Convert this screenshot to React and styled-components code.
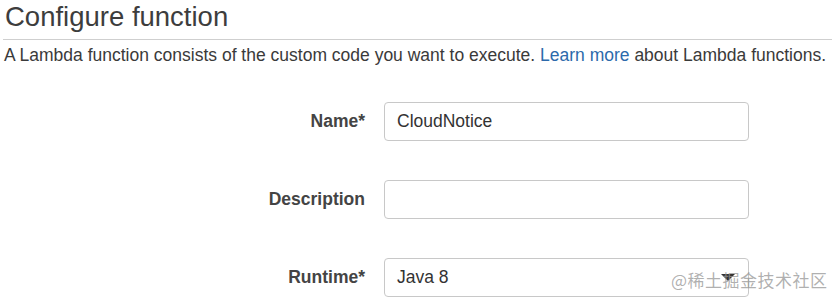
import React from 'react'
import styled, { createGlobalStyle } from 'styled-components'

const GlobalStyle = createGlobalStyle`
  body {
    margin: 0;
    background: #fff;
    font-family: 'Liberation Sans', Arial, sans-serif;
  }
`

const Page = styled.div`
  position: relative;
  width: 832px;
  height: 305px;
  overflow: hidden;
`

const Title = styled.h1`
  margin: 0 0 0 3px;
  padding: 0 0 0 2px;
  height: 40px;
  box-sizing: border-box;
  font-size: 27.5px;
  font-weight: 400;
  line-height: 34px;
  color: #3d3d3d;
  border-bottom: 1px solid #cfcfcf;
`

const Intro = styled.p`
  margin: 0;
  padding: 4px 0 0 4px;
  font-size: 17.5px;
  line-height: 22px;
  color: #3a3a3a;
  white-space: nowrap;
`

const Link = styled.a`
  color: #2c6aab;
  text-decoration: none;
`

const Form = styled.div`
  display: flex;
  flex-direction: column;
  gap: 39px;
  padding-top: 36px;
`

const Row = styled.div`
  display: grid;
  grid-template-columns: 365px 365px;
  column-gap: 19px;
  align-items: center;
`

const Label = styled.label`
  text-align: right;
  font-size: 17.5px;
  font-weight: 700;
  color: #444;
`

const Field = styled.div`
  position: relative;
  height: 39px;
  box-sizing: border-box;
  border: 1px solid #c8c8c8;
  border-radius: 4px;
  padding: 0 12px;
  display: flex;
  align-items: center;
  font-size: 17.5px;
  color: #333;
`

const Caret = styled.span`
  position: absolute;
  right: 13px;
  top: 15px;
  width: 0;
  height: 0;
  border-left: 7px solid transparent;
  border-right: 7px solid transparent;
  border-top: 7px solid #333;
`

const Watermark = styled.div`
  position: absolute;
  left: 671px;
  top: 267px;
  font-family: 'Noto Sans CJK SC', sans-serif;
  font-size: 17px;
  letter-spacing: 0.5px;
  color: rgba(150, 150, 150, 0.75);
  white-space: nowrap;
`

export default function App() {
  return (
    <Page>
      <GlobalStyle />
      <Title>Configure function</Title>
      <Intro>
        A Lambda function consists of the custom code you want to execute. <Link>Learn more</Link> about Lambda functions.
      </Intro>
      <Form>
        <Row>
          <Label>Name*</Label>
          <Field>CloudNotice</Field>
        </Row>
        <Row>
          <Label>Description</Label>
          <Field />
        </Row>
        <Row>
          <Label>Runtime*</Label>
          <Field>
            Java 8
            <Caret />
          </Field>
        </Row>
      </Form>
      <Watermark>@稀土掘金技术社区</Watermark>
    </Page>
  )
}
